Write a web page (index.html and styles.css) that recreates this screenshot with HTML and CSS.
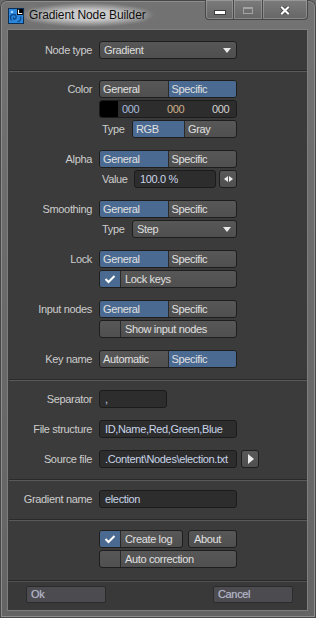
FILE: index.html
```html
<!DOCTYPE html>
<html lang="en">
<head>
    <meta charset="UTF-8">
    <title>Gradient Node Builder</title>
    <link rel="stylesheet" href="styles.css">
</head>
<body>
<div class="window">

    <!-- title bar -->
    <div class="titlebar">
        <svg class="app-icon" width="16" height="16" viewBox="0 0 16 16">
            <rect x="0.5" y="0.5" width="15" height="15" fill="#2c86dc" stroke="#0d2f55"/>
            <path d="M4 12.5 C1.5 11 2 6.5 5.5 6.5 C8.5 6.5 9 10 7 11 C5.5 11.5 4.8 10 6 9.3" fill="none" stroke="#0f4b8c" stroke-width="1.4"/>
            <path d="M9.5 14 C12 13 13.5 11 12.5 8.5" fill="none" stroke="#0f4b8c" stroke-width="1.3"/>
            <circle cx="4" cy="4" r="1.3" fill="#9fd3ff"/>
            <rect x="9" y="1" width="6" height="6" fill="#000"/>
            <polyline points="10.5,1.8 10.5,5.5 14.2,5.5" fill="none" stroke="#fff" stroke-width="1.2"/>
        </svg>
        <span class="title">Gradient Node Builder</span>
        <div class="caption">
            <span class="cap cap-min"><i></i></span>
            <span class="cap cap-max"><i></i></span>
            <span class="cap cap-close">
                <svg width="10" height="9" viewBox="0 0 10 9">
                    <path d="M1 0.5 L9 8.5 M9 0.5 L1 8.5" stroke="#3a3a3a" stroke-width="3.6"/>
                    <path d="M1.2 0.8 L8.8 8.2 M8.8 0.8 L1.2 8.2" stroke="#fff" stroke-width="2.2"/>
                </svg>
            </span>
        </div>
    </div>

    <div class="client">

        <div class="section section-top">
            <div class="row">
                <span class="lbl">Node type</span>
                <div class="dropdown">Gradient<span class="arrow-down"></span></div>
            </div>
        </div>
        <div class="sep"></div>

        <div class="section section-groups">
            <div class="group">
                <div class="row">
                    <span class="lbl">Color</span>
                    <div class="seg"><span>General</span><span class="on">Specific</span></div>
                </div>
                <div class="row">
                    <span class="lbl"></span>
                    <div class="field color-field">
                        <span class="swatch"></span>
                        <span class="num num-r">000</span>
                        <span class="num num-g">000</span>
                        <span class="num num-b">000</span>
                    </div>
                </div>
                <div class="row">
                    <span class="lbl"></span>
                    <div class="sub">
                        <span class="sublbl">Type</span>
                        <div class="seg"><span class="on">RGB</span><span>Gray</span></div>
                    </div>
                </div>
            </div>

            <div class="group">
                <div class="row">
                    <span class="lbl">Alpha</span>
                    <div class="seg"><span class="on">General</span><span>Specific</span></div>
                </div>
                <div class="row">
                    <span class="lbl"></span>
                    <div class="sub">
                        <span class="sublbl sublbl-wide">Value</span>
                        <div class="field value-field">100.0 %</div>
                        <div class="spin"><i class="tri-left"></i><i class="tri-right"></i></div>
                    </div>
                </div>
            </div>

            <div class="group">
                <div class="row">
                    <span class="lbl">Smoothing</span>
                    <div class="seg"><span class="on">General</span><span>Specific</span></div>
                </div>
                <div class="row">
                    <span class="lbl"></span>
                    <div class="sub">
                        <span class="sublbl">Type</span>
                        <div class="dropdown dropdown-small">Step<span class="arrow-down"></span></div>
                    </div>
                </div>
            </div>

            <div class="group">
                <div class="row">
                    <span class="lbl">Lock</span>
                    <div class="seg"><span class="on">General</span><span>Specific</span></div>
                </div>
                <div class="row">
                    <span class="lbl"></span>
                    <div class="check">
                        <span class="box on"><svg width="12" height="10" viewBox="0 0 12 10"><polyline points="1.5,5 4.5,8 10.5,2" fill="none" stroke="#fff" stroke-width="2"/></svg></span>
                        <span class="txt">Lock keys</span>
                    </div>
                </div>
            </div>

            <div class="group">
                <div class="row">
                    <span class="lbl">Input nodes</span>
                    <div class="seg"><span class="on">General</span><span>Specific</span></div>
                </div>
                <div class="row">
                    <span class="lbl"></span>
                    <div class="check">
                        <span class="box"></span>
                        <span class="txt">Show input nodes</span>
                    </div>
                </div>
            </div>

            <div class="group">
                <div class="row">
                    <span class="lbl">Key name</span>
                    <div class="seg"><span>Automatic</span><span class="on">Specific</span></div>
                </div>
            </div>
        </div>
        <div class="sep"></div>

        <div class="section section-files">
            <div class="row">
                <span class="lbl">Separator</span>
                <div class="field field-short">,</div>
            </div>
            <div class="row">
                <span class="lbl">File structure</span>
                <div class="field">ID,Name,Red,Green,Blue</div>
            </div>
            <div class="row">
                <span class="lbl">Source file</span>
                <div class="sub">
                    <div class="field field-path">.Content\Nodes\election.txt</div>
                    <div class="go"><i class="tri-go"></i></div>
                </div>
            </div>
        </div>
        <div class="sep"></div>

        <div class="section">
            <div class="row">
                <span class="lbl">Gradient name</span>
                <div class="field">election</div>
            </div>
        </div>
        <div class="sep"></div>

        <div class="section">
            <div class="row">
                <span class="lbl"></span>
                <div class="sub">
                    <div class="check check-log">
                        <span class="box on"><svg width="12" height="10" viewBox="0 0 12 10"><polyline points="1.5,5 4.5,8 10.5,2" fill="none" stroke="#fff" stroke-width="2"/></svg></span>
                        <span class="txt">Create log</span>
                    </div>
                    <div class="btn btn-about">About</div>
                </div>
            </div>
            <div class="row">
                <span class="lbl"></span>
                <div class="check">
                    <span class="box"></span>
                    <span class="txt">Auto correction</span>
                </div>
            </div>
        </div>

        <!-- bottom buttons -->
        <div class="footer">
            <div class="foot-btn">Ok</div>
            <div class="foot-btn">Cancel</div>
        </div>
    </div>
</div>
</body>
</html>
```

FILE: styles.css
```css
/* page and window frame */
body {
    margin: 0;
    background: #6b6b6b;
    font-family: "Liberation Sans", Arial, sans-serif;
    font-size: 11px;
    letter-spacing: -0.35px;
}

.window {
    width: 316px;
    height: 618px;
    box-sizing: border-box;
    display: flex;
    flex-direction: column;
    padding: 0 8px 7px 7px;
    background: linear-gradient(to bottom, #737373 0%, #6c6c6c 30%, #646464 100%);
    border-radius: 7px 7px 0 0;
    box-shadow: inset 0 0 0 1px #474747, inset 0 0 0 2px #8d8d8d;
}

/* title bar */
.titlebar {
    height: 29px;
    display: flex;
    align-items: flex-start;
    flex-shrink: 0;
}

.app-icon {
    margin: 8px 0 0 1px;
}

.title {
    margin: 3px 0 0 -3px;
    padding: 4px 8px;
    line-height: 16px;
    font-size: 12px;
    letter-spacing: -0.1px;
    color: #101010;
    background: radial-gradient(ellipse at center, rgba(225, 225, 225, 0.75) 30%, rgba(200, 200, 200, 0) 72%);
    text-shadow: 0 0 6px rgba(255, 255, 255, 0.6);
}

.caption {
    margin-left: auto;
    display: flex;
    height: 20px;
}

.cap {
    height: 20px;
    box-sizing: border-box;
    display: flex;
    justify-content: center;
    align-items: flex-start;
    border: 1px solid #474747;
    border-top: none;
    background: linear-gradient(to bottom, #7b7b7b, #666666);
    box-shadow: inset 0 0 0 1px rgba(255, 255, 255, 0.22);
}

.cap + .cap {
    margin-left: -1px;
}

.cap-min {
    width: 29px;
    padding-top: 11px;
    border-radius: 0 0 0 4px;
}

.cap-min i {
    width: 10px;
    height: 3px;
    background: #fff;
    box-shadow: 0 0 0 1px #3d3d3d;
}

.cap-max {
    width: 30px;
    padding-top: 7px;
}

.cap-max i {
    width: 10px;
    height: 7px;
    box-sizing: border-box;
    border: 1px solid #a3a3a3;
    border-top-width: 2px;
}

.cap-close {
    width: 46px;
    padding-top: 6px;
    border-radius: 0 0 4px 0;
}

/* client area */
.client {
    flex: 1;
    display: flex;
    flex-direction: column;
    background: #3b3b3b;
    border: 1px solid #7e7e7e;
}

.section {
    display: flex;
    flex-direction: column;
    gap: 2px;
    padding: 9px 0 11px;
}

.section-top {
    padding-top: 11px;
}

.section-groups {
    padding-top: 8px;
    gap: 12px;
}

.section-files {
    gap: 12px;
}

.group {
    display: flex;
    flex-direction: column;
    gap: 2px;
}

/* separator line between sections */
.sep {
    height: 2px;
    box-sizing: border-box;
    margin-left: 1px;
    border-top: 1px solid #2a2a2a;
    border-bottom: 1px solid #5a5a5a;
}

.row {
    display: grid;
    grid-template-columns: 84px 1fr;
    column-gap: 7px;
    height: 18px;
}

.lbl {
    text-align: right;
    line-height: 18px;
    color: #cdcdcd;
    white-space: nowrap;
}

/* segmented buttons */
.seg {
    width: 138px;
    height: 18px;
    box-sizing: border-box;
    display: flex;
    border: 1px solid #1e1e1e;
    border-radius: 3px;
    overflow: hidden;
    background: linear-gradient(to bottom, #575757, #4f4f4f);
}

.seg span {
    flex: 1;
    line-height: 16px;
    padding-left: 3px;
    color: #e0e0e0;
    white-space: nowrap;
}

.seg span + span {
    border-left: 1px solid #2a2a2a;
}

.seg .on {
    background: #4a6a91;
}

/* sub rows (Type / Value) */
.sub {
    display: flex;
    align-items: center;
    width: 138px;
    height: 18px;
}

.sublbl {
    width: 33px;
    flex-shrink: 0;
    box-sizing: border-box;
    padding-left: 3px;
    line-height: 18px;
    color: #cdcdcd;
}

.sublbl-wide {
    width: 35px;
}

.sub .seg {
    width: auto;
    flex: 1;
}

/* text fields */
.field {
    width: 138px;
    height: 18px;
    box-sizing: border-box;
    background: #2d2d2d;
    border: 1px solid #1b1b1b;
    border-radius: 3px;
    padding-left: 5px;
    line-height: 16px;
    color: #c9d5e9;
    white-space: nowrap;
    overflow: hidden;
}

.field-short {
    width: 68px;
}

.field-path {
    flex-shrink: 0;
}

.color-field {
    display: flex;
    padding-left: 0;
}

.swatch {
    width: 18px;
    height: 16px;
    background: #000;
    flex-shrink: 0;
}

.num {
    width: 45px;
    flex-shrink: 0;
    box-sizing: border-box;
    padding-left: 4px;
}

.num-r {
    color: #a7bbdc;
}

.num-g {
    color: #cfb08a;
}

.num-b {
    flex: 1;
    color: #d3d3d3;
}

.value-field {
    width: 82px;
    flex-shrink: 0;
    margin-right: 3px;
}

/* small square buttons */
.spin,
.go {
    width: 18px;
    height: 18px;
    box-sizing: border-box;
    flex-shrink: 0;
    display: flex;
    justify-content: center;
    align-items: center;
    gap: 1px;
    border: 1px solid #1e1e1e;
    border-radius: 3px;
    background: linear-gradient(to bottom, #595959, #4f4f4f);
}

.go {
    margin-left: 4px;
}

.tri-left {
    border-right: 4px solid #ececec;
    border-top: 3px solid transparent;
    border-bottom: 3px solid transparent;
}

.tri-right {
    border-left: 4px solid #ececec;
    border-top: 3px solid transparent;
    border-bottom: 3px solid transparent;
}

.tri-go {
    margin-left: 1px;
    border-left: 6px solid #ececec;
    border-top: 5px solid transparent;
    border-bottom: 5px solid transparent;
}

/* dropdowns */
.dropdown {
    width: 138px;
    height: 18px;
    box-sizing: border-box;
    display: flex;
    align-items: center;
    justify-content: space-between;
    padding: 0 5px 0 4px;
    border: 1px solid #1e1e1e;
    border-radius: 3px;
    background: linear-gradient(to bottom, #575757, #4f4f4f);
    color: #dedede;
}

.dropdown-small {
    width: auto;
    flex: 1;
}

.arrow-down {
    border-top: 5px solid #e8e8e8;
    border-left: 4.5px solid transparent;
    border-right: 4.5px solid transparent;
}

/* check buttons */
.check,
.btn {
    width: 138px;
    height: 18px;
    box-sizing: border-box;
    display: flex;
    border: 1px solid #1e1e1e;
    border-radius: 3px;
    overflow: hidden;
    background: linear-gradient(to bottom, #575757, #4f4f4f);
    color: #e0e0e0;
    line-height: 16px;
    white-space: nowrap;
}

.check .box {
    width: 20px;
    flex-shrink: 0;
    display: flex;
    justify-content: center;
    align-items: center;
    border-right: 1px solid #2a2a2a;
}

.check .box.on {
    background: #4a6a91;
}

.check .txt {
    padding-left: 4px;
}

.check-log {
    width: 84px;
    margin-right: 5px;
}

.btn-about {
    width: 49px;
    padding-left: 5px;
}

/* Ok / Cancel */
.footer {
    margin-top: auto;
    height: 30px;
    box-sizing: border-box;
    display: flex;
    justify-content: space-between;
    padding: 5px 14px 0 18px;
    border-top: 1px solid #2a2a2a;
    box-shadow: inset 0 1px 0 #505050;
    background: #393939;
}

.foot-btn {
    width: 80px;
    height: 17px;
    box-sizing: border-box;
    padding-left: 4px;
    border: 1px solid #2b2b2b;
    border-radius: 2px;
    background: #4b4b50;
    color: #b4b6c8;
    font-size: 11px;
    line-height: 15px;
    text-shadow: 0 0 1px rgba(200, 201, 216, 0.5);
}
```
